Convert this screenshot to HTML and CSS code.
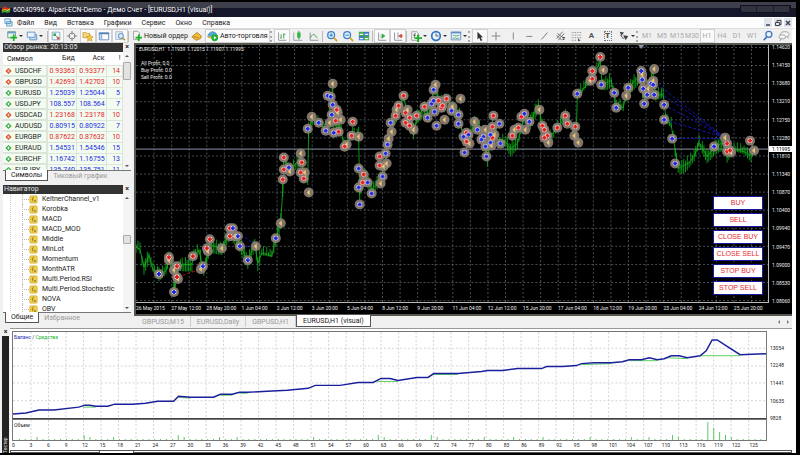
FILE: index.html
```html
<!DOCTYPE html>
<html lang="ru">
<head>
    <meta charset="UTF-8">
    <meta name="viewport" content="width=device-width, initial-scale=1.0">
    <title>60040996: Alpari-ECN-Demo - Демо Счет - [EURUSD,H1 (visual)]</title>
    <link rel="stylesheet" href="styles.css">
</head>
<body>
    <svg class="sprite" aria-hidden="true">
        <symbol id="plus" viewBox="0 0 8 8"><path d="M3 0h2v3h3v2H5v3H3V5H0V3h3z" fill="#18b428"/></symbol>
        <symbol id="fx" viewBox="0 0 10 10">
            <rect x="1" y="1" width="8" height="8" rx="1" fill="#f3d04c" stroke="#d9b23a"/>
            <path d="M5.500 2.500q-1.500-.5-1.500 1.500v3M3 4.500h2M5.500 5.500l2 2.200M7.500 5.500l-2 2.200" fill="none" stroke="#8d7120" stroke-width=".8"/>
        </symbol>
        <symbol id="up" viewBox="0 0 8 8"><path d="M4 1l3.500 3.500L4 8 .5 4.500z" fill="#2fa63a"/><path d="M4 3v3M2.500 4.500h3" stroke="#fff"/></symbol>
        <symbol id="down" viewBox="0 0 8 8"><path d="M4 1l3.500 3.500L4 8 .5 4.500z" fill="#dd4b25"/><path d="M4 3v3M2.500 4.500h3" stroke="#ffd9c0"/></symbol>
    </svg>

    <div class="terminal">
        <header class="title-bar">
            <svg class="logo" viewBox="0 0 12 10"><path d="M1 3q3-3 6-1t4-1v2q-2 2-5 1T1 5z" fill="#d33222"/><path d="M1 5q3-2 5-1t5-1v2q-2 2-5 1T1 7z" fill="#e8b422"/><path d="M1 7q3-2 5-1t5-1v2q-2 2-5 1T1 9z" fill="#2fa838"/></svg>
            <h1>60040996: Alpari-ECN-Demo - Демо Счет - [EURUSD,H1 (visual)]</h1>
            <div class="caption"><span></span><span></span><span></span></div>
        </header>

        <nav class="menu-bar">
            <svg class="menu-icon" viewBox="0 0 10 10"><path d="M1 1h6v5H1zM3 4h6v5H3z" fill="#e5f1fb" stroke="#5b94c9"/><path d="M4 7l1-1 1 1 2-2" fill="none" stroke="#3a7"/></svg>
            <a href="#">Файл</a>
            <a href="#">Вид</a>
            <a href="#">Вставка</a>
            <a href="#">Графики</a>
            <a href="#">Сервис</a>
            <a href="#">Окно</a>
            <a href="#">Справка</a>
            <div class="window-buttons">
                <button aria-label="Свернуть"><svg viewBox="0 0 8 8"><path d="M2 6h4" stroke="#445" stroke-width="1.500"/></svg></button>
                <button aria-label="Восстановить"><svg viewBox="0 0 8 8"><path d="M3 3V1.500h4v4H5.500M1.500 3.500h4v3h-4z" fill="none" stroke="#445"/></svg></button>
                <button aria-label="Закрыть"><svg viewBox="0 0 8 8"><path d="M2 2l4 4M6 2L2 6" stroke="#445" stroke-width="1.500"/></svg></button>
            </div>
        </nav>

        <div class="toolbar">
            <button class="tool drop" aria-label="Новый график"><svg viewBox="0 0 14 14"><path d="M2 2h9v7H2z" fill="#e9f4ea" stroke="#6a9a78"/><path d="M2 3h9" stroke="#6a9ad0" stroke-width="2"/><use href="#plus" x="5" y="5" width="8" height="8"/></svg></button>
            <button class="tool drop" aria-label="Профили"><svg viewBox="0 0 14 14"><path d="M4.500 5.500h8v6h-8z" fill="#c5dcf3" stroke="#5d8ec4"/><path d="M1.500 2.500h9v6h-9z" fill="#eaf3fc" stroke="#5d8ec4"/></svg></button>
            <i class="sep wide"></i>
            <button class="tool on" aria-label="Обзор рынка"><svg viewBox="0 0 14 14"><path d="M2.500 2.500h9v9h-9z" fill="#f2f8ff" stroke="#7aa3cc"/><path d="M4 4h3v3H4z" fill="#2daa43"/><path d="M8 8h3v3H8z" fill="#e2583a"/><path d="M6 6l3 3" stroke="#2daa43"/></svg></button>
            <button class="tool" aria-label="Окно данных"><svg viewBox="0 0 14 14"><circle cx="7" cy="7" r="3.500" fill="none" stroke="#777"/><path d="M7 1v4M7 9v4M1 7h4M9 7h4" stroke="#777"/></svg></button>
            <button class="tool on" aria-label="Навигатор"><svg viewBox="0 0 14 14"><path d="M1 3h4l1 1h3v5H1z" fill="#f4d777" stroke="#b98e28" stroke-width=".7"/><path d="M9 5l1.300 2.600 2.700.4-2 2 .5 3L9 11.600 6.500 13l.5-3-2-2 2.700-.4z" fill="#fbc93b" stroke="#b98e28" stroke-width=".7"/></svg></button>
            <button class="tool on" aria-label="Терминал"><svg viewBox="0 0 14 14"><path d="M1.500 3.500h11v8h-11z" fill="#fff" stroke="#5681b5"/><path d="M1 4h12" stroke="#5681b5" stroke-width="2"/><path d="M4 5v6" stroke="#8ab1dd" stroke-width="2"/></svg></button>
            <button class="tool on" aria-label="Тестер стратегий"><svg viewBox="0 0 14 14"><path d="M2 2h8v9H2z" fill="#e6eef7" stroke="#a0b4c8"/><circle cx="8" cy="7" r="3" fill="#d4e8fb" stroke="#5681b5"/><path d="M10 9l3 3" stroke="#c08a2c" stroke-width="1.500"/></svg></button>
            <i class="sep"></i>
            <button class="tool text"><svg viewBox="0 0 14 14"><path d="M3 1.500h5l2 2V11H3z" fill="#f6f6f6" stroke="#999"/><use href="#plus" x="5" y="5" width="8" height="8"/></svg>Новый ордер</button>
            <button class="tool" aria-label="MetaEditor"><svg viewBox="0 0 14 14"><path d="M1 8l6-5 5 4-1 3-5 2z" fill="#f2bd3a" stroke="#b07a16"/><path d="M3 8l6 1" stroke="#b07a16"/></svg></button>
            <button class="tool text on"><svg viewBox="0 0 14 14"><path d="M1 8q0-5 5-6 5 0 6 5z" fill="#57a9dc" stroke="#3579a8" stroke-width=".7"/><path d="M1 8q5 2 11-1" fill="none" stroke="#e4b443" stroke-width="2"/><circle cx="9" cy="9" r="4" fill="#1fae35"/><path d="M8 7l3 2-3 2z" fill="#fff"/></svg>Авто-торговля</button>
            <i class="grip"></i>
            <button class="tool on" aria-label="Бары"><svg viewBox="0 0 14 14"><path d="M3 3v9h9" fill="none" stroke="#889"/><path d="M6 5v5M5 9h1M9 4v6M9 5h2" stroke="#2a9d38" /></svg></button>
            <button class="tool" aria-label="Свечи"><svg viewBox="0 0 14 14"><path d="M2 3v9h10" fill="none" stroke="#99a"/><path d="M8 1v10" stroke="#1a8a2a"/><path d="M6 3h4v6H6z" fill="#2bb83c"/></svg></button>
            <button class="tool" aria-label="Линия"><svg viewBox="0 0 14 14"><path d="M2.500 3v9H12" fill="none" stroke="#889"/><path d="M3 9q3-6 5-3t3 3" fill="none" stroke="#2a9d38"/></svg></button>
            <i class="sep"></i>
            <button class="tool" aria-label="Увеличить"><svg viewBox="0 0 14 14"><circle cx="6" cy="6" r="4" fill="#d9edfc" stroke="#3d83c8" stroke-width="1.500"/><path d="M4 6h4M6 4v4" stroke="#2a6db0"/><path d="M9 9l4 4" stroke="#d9a227" stroke-width="2"/></svg></button>
            <button class="tool" aria-label="Уменьшить"><svg viewBox="0 0 14 14"><circle cx="6" cy="6" r="4" fill="#d9edfc" stroke="#3d83c8" stroke-width="1.500"/><path d="M4 6h4" stroke="#2a6db0"/><path d="M9 9l4 4" stroke="#d9a227" stroke-width="2"/></svg></button>
            <button class="tool" aria-label="Расположить окна"><svg viewBox="0 0 14 14"><path d="M1 2h6v5H1zM7 7h6v5H7z" fill="#3fae49"/><path d="M7 2h6v5H7zM1 7h6v5H1z" fill="#3f78c3"/><path d="M2 5h4M8 5h4M2 10h4M8 10h4" stroke="#f4f8ff" stroke-width="1.500"/></svg></button>
            <i class="sep"></i>
            <button class="tool on" aria-label="Автопрокрутка"><svg viewBox="0 0 14 14"><path d="M3 3v9h9M6 10V5" fill="none" stroke="#889"/><path d="M7 4l4 3-4 3z" fill="#2bb13b"/></svg></button>
            <button class="tool on" aria-label="Сдвиг графика"><svg viewBox="0 0 14 14"><path d="M3 3v9h9M7 3v7" fill="none" stroke="#889"/><path d="M8 7l3-2v4zM10 7h3" fill="#c8503c" stroke="#c8503c"/></svg></button>
            <i class="sep"></i>
            <button class="tool drop" aria-label="Индикаторы"><svg viewBox="0 0 14 14"><path d="M2 2h6l2 2v8H2z" fill="#f7f7f7" stroke="#999"/><path d="M5 9V5q0-1 1.500-1M4 6h3" fill="none" stroke="#555"/><use href="#plus" x="5" y="5" width="9" height="9"/></svg></button>
            <button class="tool drop" aria-label="Периоды"><svg viewBox="0 0 14 14"><circle cx="7" cy="7" r="5" fill="#edf6ff" stroke="#2e75c4" stroke-width="2"/><path d="M7 4v3h3" fill="none" stroke="#345"/></svg></button>
            <button class="tool drop" aria-label="Шаблоны"><svg viewBox="0 0 14 14"><path d="M1.500 2.500h11v9h-11z" fill="#eef6ff" stroke="#5d8ec4"/><path d="M1 3h12" stroke="#5d8ec4" stroke-width="2"/><path d="M3 7l2-1 2 1 4-1M3 10l3-1 2 1 3-1" fill="none" stroke="#4b9a66"/></svg></button>
            <i class="grip"></i>
            <button class="tool on" aria-label="Курсор"><svg viewBox="0 0 14 14"><path d="M4 2v9l2-2 2 4 1.500-1-1.500-3.500h2.500z" fill="#333"/></svg></button>
            <button class="tool" aria-label="Перекрестие"><svg viewBox="0 0 14 14"><path d="M7 2v10M2 7h10" stroke="#777"/></svg></button>
            <button class="tool" aria-label="Вертикальная линия"><svg viewBox="0 0 14 14"><path d="M8.500 3v8" stroke="#777"/></svg></button>
            <button class="tool" aria-label="Горизонтальная линия"><svg viewBox="0 0 14 14"><path d="M5 7.500h7" stroke="#777"/></svg></button>
            <button class="tool" aria-label="Трендовая линия"><svg viewBox="0 0 14 14"><path d="M4 11l7-8" stroke="#666"/></svg></button>
            <button class="tool" aria-label="Канал"><svg viewBox="0 0 14 14"><path d="M3 10l7-8M5 12l7-8M3 6l6 6M4 4l8 6" stroke="#666"/><path d="M10 9h3M10 11h2" stroke="#222"/></svg></button>
            <button class="tool" aria-label="Фибоначчи"><svg viewBox="0 0 14 14"><path d="M2 3h11M2 6h11M2 9h11M2 12h6" stroke="#777" stroke-dasharray="1 1"/><path d="M10 10v3M10 12h2" stroke="#333"/></svg></button>
            <button class="tool glyph" aria-label="Текст">A</button>
            <button class="tool glyph" aria-label="Метка"><b class="frame">T</b></button>
            <button class="tool drop" aria-label="Стрелки"><svg viewBox="0 0 14 14"><path d="M2 2l5 1-3 4zM6 6l6 1-3 5z" fill="#444"/><path d="M3 6l3 4 3-3" fill="none" stroke="#444"/></svg></button>
            <i class="grip"></i>
            <button class="tool period">M1</button>
            <button class="tool period">M5</button>
            <button class="tool period">M15</button>
            <button class="tool period">M30</button>
            <button class="tool period on">H1</button>
            <button class="tool period">H4</button>
            <button class="tool period">D1</button>
            <button class="tool period">W1</button>
            <div class="toolbar-end">
                <button class="tool" aria-label="Поиск"><svg viewBox="0 0 14 14"><circle cx="8" cy="5" r="3.500" fill="#edf4fc" stroke="#3c76c4" stroke-width="1.500"/><path d="M5.500 8L2 12" stroke="#3c76c4" stroke-width="2"/></svg></button>
                <button class="tool" aria-label="Чат"><svg viewBox="0 0 14 14"><ellipse cx="8" cy="5" rx="5" ry="3" fill="#f4f4f4" stroke="#999"/><ellipse cx="5" cy="8" rx="4" ry="2.500" fill="#f4f4f4" stroke="#999"/><path d="M4 10l-2 3M11 7l1 3" stroke="#999"/></svg></button>
            </div>
        </div>

        <main class="workspace">
            <aside class="sidebar">
                <section class="panel">
                    <div class="panel-title"><h2>Обзор рынка: 20:13:05</h2><button aria-label="Закрыть">×</button></div>
                    <div class="panel-body">
                        <div class="clip">
                            <table class="quotes">
                                <thead><tr><th>Символ</th><th>Бид</th><th>Аск</th><th>!</th></tr></thead>
                                <tbody>
                                    <tr class="down"><td><svg><use href="#down"/></svg>USDCHF</td><td>0.93363</td><td>0.93377</td><td>14</td></tr>
                                    <tr class="down"><td><svg><use href="#down"/></svg>GBPUSD</td><td>1.42693</td><td>1.42703</td><td>10</td></tr>
                                    <tr><td><svg><use href="#up"/></svg>EURUSD</td><td>1.25039</td><td>1.25044</td><td>5</td></tr>
                                    <tr><td><svg><use href="#up"/></svg>USDJPY</td><td>108.557</td><td>108.564</td><td>7</td></tr>
                                    <tr class="down"><td><svg><use href="#down"/></svg>USDCAD</td><td>1.23168</td><td>1.23178</td><td>10</td></tr>
                                    <tr><td><svg><use href="#up"/></svg>AUDUSD</td><td>0.80915</td><td>0.80922</td><td>7</td></tr>
                                    <tr class="down"><td><svg><use href="#down"/></svg>EURGBP</td><td>0.87622</td><td>0.87632</td><td>10</td></tr>
                                    <tr><td><svg><use href="#up"/></svg>EURAUD</td><td>1.54531</td><td>1.54546</td><td>15</td></tr>
                                    <tr><td><svg><use href="#up"/></svg>EURCHF</td><td>1.16742</td><td>1.16755</td><td>13</td></tr>
                                    <tr><td><svg><use href="#up"/></svg>EURJPY</td><td>135.740</td><td>135.751</td><td>11</td></tr>
                                </tbody>
                            </table>
                        </div>
                        <div class="scrollbar"><i class="arrow-up"></i><i class="thumb top"></i><i class="arrow-down"></i></div>
                    </div>
                    <div class="tabs"><button class="active">Символы</button><button>Тиковый график</button></div>
                </section>
                <section class="panel">
                    <div class="panel-title"><h2>Навигатор</h2><button aria-label="Закрыть">×</button></div>
                    <div class="panel-body">
                        <div class="clip">
                            <ul class="tree">
                                <li><svg><use href="#fx"/></svg>KeltnerChannel_v1</li>
                                <li><svg><use href="#fx"/></svg>Korobka</li>
                                <li><svg><use href="#fx"/></svg>MACD</li>
                                <li><svg><use href="#fx"/></svg>MACD_MOD</li>
                                <li><svg><use href="#fx"/></svg>Middle</li>
                                <li><svg><use href="#fx"/></svg>MinLot</li>
                                <li><svg><use href="#fx"/></svg>Momentum</li>
                                <li><svg><use href="#fx"/></svg>MonthATR</li>
                                <li><svg><use href="#fx"/></svg>Multi.Period.RSI</li>
                                <li><svg><use href="#fx"/></svg>Multi.Period.Stochastic</li>
                                <li><svg><use href="#fx"/></svg>NOVA</li>
                                <li><svg><use href="#fx"/></svg>OBV</li>
                            </ul>
                        </div>
                        <div class="scrollbar"><i class="arrow-up"></i><i class="thumb middle"></i><i class="arrow-down"></i></div>
                    </div>
                    <div class="tabs"><button class="active">Общие</button><button>Избранное</button></div>
                </section>
            </aside>

            <section class="chart-area">
                <div class="chart">
                    <div class="plot">
                        <svg id="priceChart" viewBox="136 45 633 258" preserveAspectRatio="none"></svg>
                        <div class="plot-info">
                            <p>EURUSD,H1 &nbsp;1.11939 1.12015 1.11907 1.11995</p>
                            <ul>
                                <li>All Profit: 0.0</li>
                                <li>Buy Profit: 0.0</li>
                                <li>Sell Profit: 0.0</li>
                            </ul>
                        </div>
                        <div class="trade-panel">
                            <button>BUY</button>
                            <button>SELL</button>
                            <button>CLOSE BUY</button>
                            <button>CLOSE SELL</button>
                            <button>STOP BUY</button>
                            <button>STOP SELL</button>
                        </div>
                    </div>
                    <div class="price-axis" id="priceAxis"><b>1.11995</b></div>
                    <div class="time-axis" id="timeAxis"></div>
                </div>
                <div class="tabs chart-tabs">
                    <button>GBPUSD,M15</button><button>EURUSD,Daily</button><button>GBPUSD,H1</button><button class="active">EURUSD,H1 (visual)</button>
                    <span class="tab-arrows"><i class="arrow-left"></i><i class="arrow-right"></i></span>
                </div>
            </section>
        </main>

        <section class="tester">
            <div class="tester-side"><button aria-label="Закрыть">×</button><span>Тестер</span></div>
            <div class="tester-body">
                <div class="balance">
                    <svg id="balanceChart" viewBox="12 332 755 87" preserveAspectRatio="none"></svg>
                    <p class="legend"><span class="blue">Баланс</span> / <span class="green">Средства</span></p>
                </div>
                <div class="balance-axis"><span>13054</span><span>12248</span><span>11441</span><span>10635</span><span>9828</span></div>
                <div class="volume">
                    <svg id="volumeChart" viewBox="12 421 755 20" preserveAspectRatio="none"></svg>
                    <p class="legend">Объем</p>
                </div>
                <div class="trade-axis" id="tradeAxis"></div>
            </div>
            <div class="tester-tabs"><i></i><i></i></div>
        </section>
    </div>

    <script>
        // Price path: x, y of the swing points
        const swings = [[136,248],[140,250],[144,268],[149,256],[153,271],[159,275],[166,272],[169,258],[175,270],[174,290],[179,266],[192,265],[194,256],[199,251],[204,273],[210,245],[222,250],[230,232],[240,245],[248,262],[255,244],[258,264],[262,254],[272,257],[276,240],[281,222],[283,190],[284,158],[290,172],[301,158],[305,178],[308,180],[309,130],[313,120],[320,125],[328,130],[333,86],[334,131],[340,125],[345,148],[353,135],[359,135],[360,195],[365,175],[372,190],[381,180],[385,165],[388,145],[391,125],[397,115],[404,97],[408,115],[414,136],[417,118],[425,108],[430,115],[435,84],[440,103],[447,100],[453,108],[460,115],[464,140],[470,140],[475,122],[485,135],[488,160],[493,125],[500,144],[505,141],[511,149],[518,144],[525,118],[531,122],[539,105],[543,126],[549,140],[558,128],[566,117],[577,135],[578,95],[583,90],[591,82],[601,62],[603,85],[612,80],[616,105],[624,108],[628,90],[640,76],[645,98],[654,72],[656,95],[664,95],[667,120],[672,125],[676,150],[679,169],[690,163],[695,157],[700,143],[708,157],[716,147],[726,142],[728,158],[735,150],[745,152],[752,156],[755,148]];

        const orders = {
            blue: [[159,275],[174,293],[203,267],[233,229],[238,237],[240,247],[248,261],[276,239],[289,168],[308,129],[319,123],[328,96],[331,97],[333,105],[332,115],[326,131],[334,133],[359,169],[359,188],[368,183],[372,194],[360,205],[383,177],[386,154],[388,145],[391,123],[428,118],[432,104],[434,101],[435,112],[434,90],[437,126],[452,111],[459,115],[459,124],[464,137],[469,135],[465,153],[478,130],[484,137],[482,140],[486,147],[491,143],[491,135],[500,124],[501,144],[487,157],[525,114],[530,122],[578,94],[602,85],[615,93],[629,88],[617,108],[642,71],[643,80],[652,84],[654,85],[644,89],[648,95],[655,95],[645,104],[665,105],[665,120],[673,139],[676,164],[715,147]],
            red: [[169,258],[177,267],[177,278],[193,257],[210,240],[207,249],[230,229],[230,237],[283,180],[284,170],[284,158],[302,163],[301,173],[304,179],[337,110],[336,121],[339,132],[353,122],[352,136],[345,147],[364,175],[363,183],[380,166],[380,157],[396,116],[399,106],[404,96],[406,113],[410,118],[406,123],[410,126],[417,116],[425,107],[439,101],[442,108],[443,106],[447,99],[467,133],[467,142],[493,138],[493,127],[494,116],[513,136],[519,128],[522,117],[543,126],[545,130],[548,136],[545,138],[558,128],[566,116],[568,124],[576,127],[601,57],[593,71],[593,79],[728,144],[728,152],[731,151],[751,141]],
            gold: [[169,261],[174,271],[178,280],[201,270],[208,252],[222,249],[235,237],[256,247],[281,224],[309,193],[290,172],[301,154],[305,173],[312,117],[333,84],[338,113],[330,123],[341,120],[347,145],[359,137],[381,184],[384,167],[387,164],[389,139],[392,132],[397,110],[408,110],[414,130],[436,85],[445,120],[453,107],[461,99],[470,144],[475,122],[486,130],[495,135],[492,146],[515,130],[526,130],[540,110],[549,143],[575,136],[579,143],[604,70],[591,81],[627,96],[643,75],[655,69],[654,81],[649,89],[726,138],[732,153],[755,151]]
        };

        const balance = [[12,415],[25,414],[38,411],[53,411],[78,408],[84,406],[89,406],[95,407],[107,407],[114,405],[132,405],[145,404],[157,402],[173,402],[178,397],[190,398],[213,398],[220,395],[232,395],[239,393],[247,393],[267,392],[287,391],[308,389],[315,386],[340,386],[358,383],[373,383],[381,379],[390,379],[398,381],[417,378],[428,378],[434,374],[458,374],[482,372],[488,371],[503,371],[518,369],[542,369],[547,367],[563,367],[577,366],[582,364],[595,363],[612,363],[623,362],[630,360],[642,360],[650,358],[658,360],[665,359],[672,356],[680,356],[688,358],[701,356],[707,351],[713,340],[718,340],[741,355],[767,354]];
        const equity = [[[82,408],[95,408]],[[178,398],[190,399]],[[220,396],[232,396]],[[239,394],[247,394]],[[377,382],[398,382]],[[434,375],[458,375]],[[582,365],[612,364]],[[630,361],[658,361]],[[668,358],[688,359]],[[701,356],[741,356]]];
        const volumes = {4:3,12:5,13:3,17:3,28:5,29:3,35:3,38:3,51:3,62:5,63:3,71:5,72:3,80:3,85:3,90:3,98:3,105:3,108:3,112:5,113:3,118:18,119:12,120:8,121:5,122:3};

        const line = (x1, y1, x2, y2, cls) => `<path class="${cls}" d="M${x1} ${y1}L${x2} ${y2}"/>`;
        const poly = (points, cls) => `<path class="${cls}" d="M${points.join('L')}"/>`;

        function drawPrice() {
            let out = '';
            for (let i = 1; i < 36; i++) out += line(136.5 + i * 17.6, 45, 136.5 + i * 17.6, 303, 'grid');
            for (let i = 0; i < 15; i++) out += line(136, 47.5 + i * 18.15, 769, 47.5 + i * 18.15, 'grid');
            out += line(136, 149.5, 769, 149.5, 'level');
            out += '<path class="shift" d="M639 45h6l-3 4z"/>';

            // bars between the swings
            let bars = '';
            for (let i = 1; i < swings.length; i++) {
                const [x1, y1] = swings[i - 1], [x2, y2] = swings[i];
                const steps = Math.max(1, Math.round(Math.abs(x2 - x1) / 1.7));
                for (let s = 0; s < steps; s++) {
                    const x = x1 + (x2 - x1) * s / steps;
                    const y = y1 + (y2 - y1) * s / steps;
                    const up = 1 + Math.abs(Math.sin(x * 2.7)) * 7;
                    const low = 1 + Math.abs(Math.cos(x * 1.9)) * 7;
                    bars += `M${x} ${y - up}V${y + low}`;
                }
            }
            out += poly(swings, 'bars') + `<path class="bars" d="${bars}"/>`;

            [[658,84,726,138],[665,96,726,138],[665,105,726,138],[665,120,726,138],[673,139,726,139],[233,229,256,246],[240,247,256,247],[617,95,629,95]].forEach(l => out += line(...l, 'trade-blue'));
            out += line(178, 278, 203, 269, 'trade-red');

            for (const kind in orders) {
                orders[kind].forEach(([x, y]) => out += `<circle class="halo" cx="${x}" cy="${y}" r="5"/>`);
            }
            orders.gold.forEach(([x, y]) => out += `<path class="gold" d="M${x - 2} ${y}l3-3v6z"/>`);
            ['red', 'blue'].forEach(kind => orders[kind].forEach(([x, y]) => {
                out += `<circle class="core" cx="${x}" cy="${y}" r="2.5"/><path class="${kind}" d="M${x - 2} ${y}h4M${x} ${y - 2}v4"/>`;
            }));
            document.getElementById('priceChart').innerHTML = out;
        }

        function drawTester() {
            let out = '', vol = '';
            for (let i = 1; i < 43; i++) {
                const x = 12.5 + i * 17.55;
                out += line(x, 332, x, 419, 'grid-light');
                vol += line(x, 421, x, 441, 'grid-light');
            }
            [348.5, 366.5, 383.5, 401.5].forEach(y => out += line(12, y, 767, y, 'grid-light'));
            equity.forEach(points => out += poly(points, 'equity'));
            out += poly(balance, 'balance-line');
            for (let i = 1; i < 128; i++) {
                const x = 12.5 + i * 5.9;
                vol += line(x, 441, x, 441 - (volumes[i] || 1), 'volume-bar');
            }
            document.getElementById('balanceChart').innerHTML = out;
            document.getElementById('volumeChart').innerHTML = vol;
        }

        function fillAxis(id, labels) {
            document.getElementById(id).insertAdjacentHTML('beforeend', labels.map(t => `<span>${t}</span>`).join(''));
        }

        drawPrice();
        drawTester();
        fillAxis('priceAxis', ['1.14620','1.14150','1.13680','1.13210','1.12750','1.12280','1.11810','1.11340','1.10870','1.10400','1.09940','1.09470','1.09000','1.08530','1.08060']);
        fillAxis('timeAxis', ['26 May 2015','27 May 12:00','28 May 20:00','1 Jun 04:00','2 Jun 12:00','3 Jun 20:00','5 Jun 04:00','8 Jun 12:00','9 Jun 20:00','11 Jun 04:00','12 Jun 12:00','15 Jun 20:00','17 Jun 04:00','18 Jun 12:00','19 Jun 20:00','23 Jun 04:00','24 Jun 12:00','25 Jun 20:00']);
        fillAxis('tradeAxis', [0,3,6,9,12,15,18,21,24,27,30,33,36,39,42,45,48,51,54,57,60,63,66,69,72,74,77,80,83,86,89,92,95,98,101,104,107,110,113,116,119,122,125]);
    </script>
</body>
</html>
```
FILE: styles.css
```css
:root {
    --ui-font: "Roboto", "Liberation Sans", sans-serif;
    --face: #f0f0f0;
    --dark: #333333;
}

* {
    box-sizing: border-box;
}

body {
    margin: 0;
    background: #000;
    font-family: var(--ui-font);
    font-size: 7px;
    line-height: 10px;
    color: #222;
}

h1, h2, p, ul {
    margin: 0;
    padding: 0;
    font-size: inherit;
    font-weight: normal;
    list-style: none;
}

button {
    margin: 0;
    padding: 0;
    border: 0;
    background: none;
    font: inherit;
    color: inherit;
    white-space: nowrap;
}

svg {
    display: block;
    flex: none;
}

.sprite {
    position: absolute;
    width: 0;
    height: 0;
}

.terminal {
    display: flex;
    flex-direction: column;
    height: 100vh;
    border: solid #000;
    border-width: 2px 4px 2px 0;
}

/* Title and menu */
.title-bar {
    display: flex;
    align-items: center;
    flex: none;
    height: 15px;
    padding: 0 5px 0 1px;
    gap: 2px;
    background: linear-gradient(#3d3f4a 0 40%, #15162a 40%);
    color: #fff;
}

.logo {
    width: 10px;
    height: 10px;
}

.caption {
    display: flex;
    align-self: flex-start;
    width: 51px;
    height: 8px;
    margin: 3px 0 0 auto;
    border: 1px solid #10111c;
    border-radius: 0 0 3px 3px;
    background: #303240;
}

.caption span {
    flex: 1;
    border-right: 1px solid #1b1c28;
}

.menu-bar, .toolbar, .workspace, .tester {
    border-right: 4px solid #fff;
    background: var(--face);
}

.menu-bar {
    display: flex;
    align-items: center;
    flex: none;
    height: 11px;
    padding-left: 4px;
    gap: 10px;
    background: #fdfdfd;
}

.menu-bar a {
    color: #222;
    text-decoration: none;
}

.menu-icon {
    width: 9px;
    height: 9px;
    margin-right: -6px;
}

.window-buttons {
    display: flex;
    gap: 2px;
    margin-left: auto;
}

.window-buttons button {
    width: 8px;
    height: 9px;
    background: #dfe3ea;
}

.window-buttons svg {
    width: 8px;
    height: 8px;
}

/* Toolbar */
.toolbar {
    display: flex;
    align-items: center;
    flex: none;
    height: 15px;
    padding-left: 4px;
    border-top: 1px solid #dcdcdc;
}

.tool {
    display: flex;
    align-items: center;
    justify-content: center;
    flex: none;
    width: 16px;
    height: 14px;
}

.tool svg {
    width: 12px;
    height: 12px;
}

.tool.on {
    border: 1px solid #d0d0d0;
    background: #fafafa;
}

.tool.drop {
    justify-content: flex-start;
    width: 20px;
    padding-left: 2px;
    gap: 1px;
}

.tool.drop::after {
    content: "";
    border: 2px solid transparent;
    border-top-color: #333;
    border-bottom: 0;
}

.tool.text {
    width: auto;
    padding: 0 1px;
    gap: 1px;
}

.tool.glyph {
    font-weight: bold;
    font-size: 8px;
    color: #555;
}

.frame {
    width: 8px;
    border: 1px dotted #777;
    line-height: 8px;
}

.tool.period {
    width: 15px;
    color: #aaa;
}

.toolbar-end {
    display: flex;
    margin-left: auto;
}

.sep {
    flex: none;
    width: 2px;
    height: 11px;
    border-left: 1px solid #bbb;
}

.sep.wide {
    width: 4px;
    border-left-color: transparent;
    border-right: 1px solid #bbb;
}

.grip {
    flex: none;
    width: 4px;
    height: 11px;
    border-left: 2px dotted #aaa;
}

/* Side panels */
.workspace {
    display: flex;
    flex: 1;
    min-height: 0;
    gap: 2px;
}

.sidebar {
    display: flex;
    flex-direction: column;
    flex: none;
    gap: 4px;
    width: 132px;
    padding: 0 1px 4px 3px;
}

.panel {
    display: flex;
    flex-direction: column;
    flex: 1;
    min-height: 0;
}

.panel-title {
    display: flex;
    justify-content: space-between;
    flex: none;
    height: 9px;
    line-height: 9px;
    color: #e4e4e4;
}

.panel-title h2 {
    flex: 1;
    padding-left: 1px;
    background: var(--dark);
}

.panel-title button {
    width: 8px;
    color: #222;
    font-weight: bold;
}

.panel-body {
    display: flex;
    flex: 1;
    min-height: 0;
    background: #fff;
}

.clip {
    flex: 1;
    overflow: hidden;
}

.quotes {
    width: 100%;
    border-collapse: collapse;
    table-layout: fixed;
    background: #f3fcf0;
}

.quotes th {
    height: 13px;
    padding: 0 2px;
    background: #fff;
    font-weight: normal;
    text-align: right;
}

.quotes th:first-child {
    width: 44px;
    padding-left: 4px;
    text-align: left;
}

.quotes th:last-child {
    width: 16px;
}

.quotes td {
    height: 11px;
    padding: 0 2px;
    border: 1px solid #dde5da;
    line-height: 10px;
    text-align: right;
    color: #1c2ee0;
}

.quotes .down td {
    color: #e2262b;
}

.quotes tr td:first-child {
    display: flex;
    align-items: center;
    gap: 3px;
    border-left: 0;
    color: #222;
}

.quotes svg {
    width: 7px;
    height: 7px;
}

.scrollbar {
    display: flex;
    flex-direction: column;
    align-items: center;
    flex: none;
    width: 8px;
    padding: 3px 0;
    background: #f4f4f4;
}

.arrow-up, .arrow-down {
    border: 2px solid transparent;
}

.arrow-up {
    border-bottom-color: #555;
    border-top: 0;
}

.arrow-down {
    margin-top: auto;
    border-top-color: #555;
    border-bottom: 0;
}

.thumb {
    width: 8px;
    border: 1px solid #aaa;
    border-radius: 1px;
    background: #e2e2e2;
}

.thumb.top {
    height: 18px;
    margin-top: 5px;
}

.thumb.middle {
    height: 9px;
    margin-top: 36px;
}

.tabs {
    display: flex;
    flex: none;
    height: 11px;
    padding-left: 2px;
    border-top: 1px solid #777;
    background: var(--face);
    color: #999;
}

.tabs button {
    padding: 0 5px;
    line-height: 10px;
}

.tabs .active {
    margin-top: -1px;
    border: 1px solid #555;
    border-top: 0;
    background: #fff;
    color: #222;
}

.tree {
    padding-left: 10px;
    background: repeating-linear-gradient(#ccc 0 1px, transparent 1px 2px) 7px 0 / 1px 100% no-repeat;
}

.tree li {
    display: flex;
    align-items: center;
    height: 10px;
    margin-left: 9px;
    padding-left: 1px;
    border-left: 1px dotted #bbb;
    white-space: nowrap;
}

.tree li::before {
    content: "";
    width: 5px;
    border-top: 1px dotted #bbb;
}

.tree svg {
    width: 9px;
    height: 9px;
    margin-right: 4px;
}

/* Price chart */
.chart-area {
    display: flex;
    flex-direction: column;
    flex: 1;
    min-width: 0;
}

.chart {
    display: grid;
    grid-template-columns: 1fr 23px;
    grid-template-rows: 1fr 11px;
    flex: 1;
    min-height: 0;
    border: 2px solid #55584f;
    border-right: 0;
    background: #000;
    color: #eee;
    font-size: 5px;
}

.plot {
    position: relative;
    min-height: 0;
    border-right: 1px solid #bbb;
    border-bottom: 1px solid #bbb;
}

.plot svg {
    position: absolute;
    width: 100%;
    height: 100%;
}

.plot-info {
    position: relative;
    padding: 0 3px;
    line-height: 8px;
}

.plot-info ul {
    padding: 7px 2px;
    line-height: 7px;
}

.trade-panel {
    position: absolute;
    right: 5px;
    bottom: 7px;
    display: grid;
    gap: 3px;
    width: 50px;
}

.trade-panel button {
    height: 14px;
    border: 1px solid #1a1aa0;
    background: #fff;
    color: #e8282c;
    font-family: "Liberation Sans", sans-serif;
    font-size: 7px;
    line-height: 12px;
}

.price-axis {
    position: relative;
    display: flex;
    flex-direction: column;
    justify-content: space-between;
    margin: -1px 0 -2px;
    padding-left: 3px;
    line-height: 7px;
}

.price-axis b {
    position: absolute;
    top: 39%;
    left: 0;
    right: 0;
    padding-left: 3px;
    background: #fff;
    color: #000;
    font-weight: normal;
    line-height: 6px;
}

.time-axis {
    display: grid;
    grid-template-columns: repeat(18, 1fr);
    white-space: nowrap;
}

.time-axis span {
    width: 0;
}

.grid {
    stroke: #66707c;
    stroke-width: 1;
    stroke-dasharray: 2 2;
    opacity: 0.7;
}

.level {
    stroke: #8a94a6;
}

.shift {
    fill: #8a94a6;
}

.bars {
    fill: none;
    stroke: #10b81c;
    stroke-width: 0.8;
}

.trade-blue, .trade-red {
    stroke: #1616b8;
    stroke-dasharray: 3 2;
}

.trade-red {
    stroke: #a01a1a;
}

.halo {
    fill: #8d8076;
    fill-opacity: 0.9;
}

.core {
    fill: #f3efe9;
}

.gold {
    fill: #e8c478;
}

.red, .blue {
    stroke: #e81c1c;
    stroke-width: 2;
}

.blue {
    stroke: #1c28e0;
}

.chart-tabs {
    border-top: 0;
}

.chart-tabs button {
    padding: 0 6px;
    border-right: 1px solid #ccc;
}

.tab-arrows {
    display: flex;
    align-items: center;
    gap: 7px;
    margin: 0 3px 0 auto;
}

.arrow-left, .arrow-right {
    border: 2px solid transparent;
    border-right-color: #777;
    border-left: 0;
}

.arrow-right {
    border: 2px solid transparent;
    border-left-color: #777;
    border-right: 0;
}

/* Strategy tester */
.tester {
    display: grid;
    grid-template-columns: 10px 1fr;
    grid-template-rows: auto 2px;
    flex: none;
    padding-top: 1px;
}

.tester-side {
    display: flex;
    flex-direction: column;
    grid-row: span 2;
    padding: 0 1px 0 2px;
}

.tester-side button {
    height: 8px;
    font-weight: bold;
    line-height: 8px;
}

.tester-side span {
    flex: 1;
    width: 7px;
    background: #222;
    color: #ddd;
    font-size: 5px;
    line-height: 7px;
    writing-mode: vertical-rl;
    transform: rotate(180deg);
}

.tester-body {
    display: grid;
    grid-template-columns: 1fr 25px;
    grid-template-rows: 88px 22px 9px;
    padding: 2px 0 0 2px;
    border-top: 1px solid #999;
    border-bottom: 1px solid #555;
    background: #fff;
    font-size: 5px;
    line-height: 8px;
}

.balance, .volume {
    position: relative;
    border: 1px solid #777;
}

.balance {
    border-bottom-color: #444;
}

.balance svg, .volume svg {
    position: absolute;
    width: 100%;
    height: 100%;
}

.legend {
    position: relative;
    padding: 1px;
}

.legend .blue {
    color: #2028b8;
}

.legend .green {
    color: #22b535;
}

.balance-axis {
    display: grid;
    grid-template-rows: repeat(5, 1fr);
    align-items: center;
    margin: 8px 0 -8px;
    padding-left: 3px;
}

.volume {
    grid-column: 1;
}

.trade-axis {
    display: grid;
    grid-template-columns: repeat(43, 1fr);
    grid-column: 1;
}

.grid-light {
    stroke: #d4d4d4;
    stroke-dasharray: 2 2;
}

.balance-line {
    fill: none;
    stroke: #1a1f9c;
    stroke-width: 1.5;
}

.equity {
    fill: none;
    stroke: #5ccf62;
}

.volume-bar {
    stroke: #5cc862;
}

.tester-tabs {
    display: flex;
    gap: 33px;
    background: #fff;
}

.tester-tabs i {
    width: 90px;
    border: 1px solid #555;
    border-top: 0;
}

.tester-tabs i:last-child {
    flex: 1;
}
```
